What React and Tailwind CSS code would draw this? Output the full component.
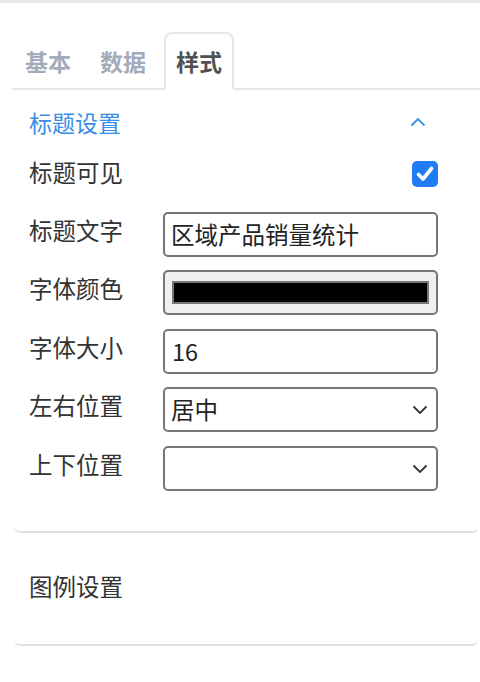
import React from "react";

const font = { fontFamily: '"Noto Sans CJK SC", "Noto Sans", sans-serif' };

function Chevron() {
  return (
    <svg width="16" height="10" viewBox="0 0 16 10" className="shrink-0">
      <path d="M1.5 1.5 L8 8 L14.5 1.5" fill="none" stroke="#333" strokeWidth="1.8" />
    </svg>
  );
}

function Row({ label, children, mt = "mt-[13px]" }) {
  return (
    <div className={`flex items-start ${mt}`}>
      <div className="w-[134px] shrink-0 pt-[5px] leading-[26px] text-[23.5px] text-[#333]">{label}</div>
      <div className="w-[275px]">{children}</div>
    </div>
  );
}

export default function App() {
  return (
    <div className="w-[480px] h-[682px] bg-white overflow-hidden" style={font}>
      <div className="h-[3px] bg-[#e8e8e8]" />
      <div className="ml-[12px] mt-[29px] flex items-end border-b-2 border-[#e4e7ed] h-[58px]">
        <div className="h-[58px] -mb-[2px] pl-[11px] pr-[13px] border-2 border-transparent flex items-center text-[23px] font-bold text-[#a3abbb]">基本</div>
        <div className="h-[58px] -mb-[2px] px-[12px] border-2 border-transparent flex items-center text-[23px] font-bold text-[#a3abbb]">数据</div>
        <div className="h-[58px] -mb-[2px] ml-[4px] px-[10px] border-2 border-b-white border-[#e4e7ed] rounded-t-[8px] bg-white flex items-center text-[23px] font-bold text-[#515151]">样式</div>
      </div>

      <div className="ml-[14px] mr-[2px] border-b-2 border-[#dde1ea] rounded-b-[6px] pl-[15px] pb-[40px]">
        <div className="flex items-center justify-between pt-[20px] pr-[52px]">
          <span className="text-[23px] leading-[24px] text-[#3a8ee6]">标题设置</span>
          <svg width="16" height="10" viewBox="0 0 16 10">
            <path d="M1.5 8.5 L8 2 L14.5 8.5" fill="none" stroke="#3a8ee6" strokeWidth="1.8" />
          </svg>
        </div>

        <div className="flex items-center mt-[27px] w-[409px]">
          <div className="flex-1 text-[23.5px] leading-[26px] text-[#333] -mt-[4px]">标题可见</div>
          <div className="w-[26px] h-[26px] rounded-[5px] bg-[#1f7cf3] flex items-center justify-center">
            <svg width="18" height="16" viewBox="0 0 18 16">
              <path d="M2.5 8.5 L7 13 L15.5 2.5" fill="none" stroke="white" strokeWidth="3.6" strokeLinecap="round" strokeLinejoin="round" />
            </svg>
          </div>
        </div>

        <Row label="标题文字" mt="mt-[25px]">
          <div className="h-[45px] border-2 border-[#767676] rounded-[5px] flex items-center px-[6px] text-[23.5px] text-[#222]">区域产品销量统计</div>
        </Row>
        <Row label="字体颜色">
          <div className="h-[45px] border-2 border-[#767676] rounded-[5px] bg-[#efefef] flex items-center px-[7px]">
            <div className="w-full h-[23px] bg-black border-2 border-[#777]" />
          </div>
        </Row>
        <Row label="字体大小" mt="mt-[14px]">
          <div className="h-[45px] border-2 border-[#767676] rounded-[5px] flex items-center px-[7px] text-[23.5px] text-[#222]">16</div>
        </Row>
        <Row label="左右位置">
          <div className="h-[45px] border-2 border-[#767676] rounded-[5px] flex items-center justify-between pl-[6px] pr-[8px] text-[23.5px] text-[#222]">
            <span>居中</span>
            <Chevron />
          </div>
        </Row>
        <Row label="上下位置" mt="mt-[14px]">
          <div className="h-[45px] border-2 border-[#767676] rounded-[5px] flex items-center justify-end pr-[8px]">
            <Chevron />
          </div>
        </Row>
      </div>

      <div className="ml-[14px] mr-[2px] border-b-2 border-[#dde1ea] rounded-b-[6px] pl-[15px] pt-[40px] pb-[45px]">
        <div className="text-[23.5px] leading-[26px] text-[#333]">图例设置</div>
      </div>
    </div>
  );
}
